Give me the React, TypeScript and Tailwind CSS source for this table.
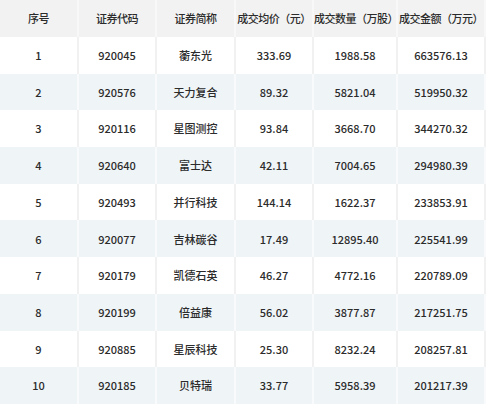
import React from "react";

const rows: [string, string, string, string, string, string][] = [
  ["1", "920045", "蘅东光", "333.69", "1988.58", "663576.13"],
  ["2", "920576", "天力复合", "89.32", "5821.04", "519950.32"],
  ["3", "920116", "星图测控", "93.84", "3668.70", "344270.32"],
  ["4", "920640", "富士达", "42.11", "7004.65", "294980.39"],
  ["5", "920493", "并行科技", "144.14", "1622.37", "233853.91"],
  ["6", "920077", "吉林碳谷", "17.49", "12895.40", "225541.99"],
  ["7", "920179", "凯德石英", "46.27", "4772.16", "220789.09"],
  ["8", "920199", "倍益康", "56.02", "3877.87", "217251.75"],
  ["9", "920885", "星辰科技", "25.30", "8232.24", "208257.81"],
  ["10", "920185", "贝特瑞", "33.77", "5958.39", "201217.39"],
];

const headers = ["序号", "证券代码", "证券简称", "成交均价（元）", "成交数量（万股）", "成交金额（万元）"];
const widths = ["w-[79px]", "w-[78px]", "w-[79px]", "w-[78px]", "w-[84px]", "w-[88px]"];

export default function App() {
  return (
    <div
      className="w-[491px] h-[404px] bg-white overflow-hidden text-[11px] text-[#2b2b2b] font-medium"
      style={{ fontFamily: '"Noto Sans CJK SC", "Noto Sans", sans-serif' }}
    >
      <div className="w-[486px]">
        <div className="flex h-[37px] bg-[#f2f2f2]">
          {headers.map((h, i) => (
            <div
              key={i}
              className={`${widths[i]} shrink-0 flex items-center justify-center border-r-2 border-[#f8f8f8] tracking-[-0.5px]`}
            >
              {h}
            </div>
          ))}
        </div>
        {rows.map((r, ri) => (
          <div key={ri} className={`flex h-[36.7px] ${ri % 2 === 1 ? "bg-[#eff4f7]" : "bg-white"}`}>
            {r.map((c, i) => (
              <div
                key={i}
                className={`${widths[i]} shrink-0 flex items-center justify-center border-r-2 ${ri % 2 === 1 ? "border-[#f8fafb]" : "border-[#f1f1f1]"}`}
              >
                {c}
              </div>
            ))}
          </div>
        ))}
      </div>
    </div>
  );
}
